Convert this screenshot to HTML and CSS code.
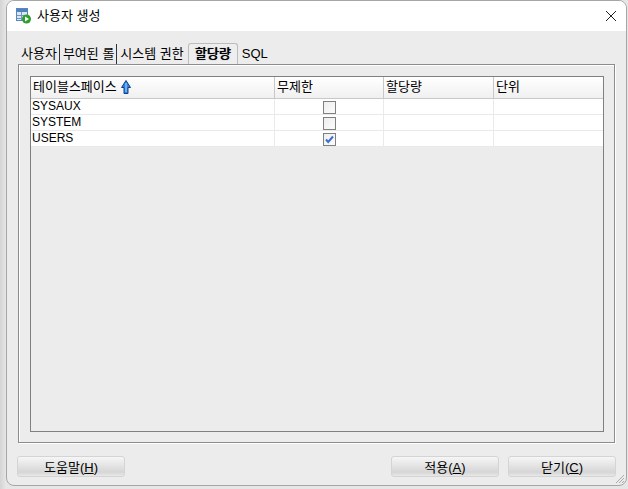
FILE: index.html
```html
<!DOCTYPE html>
<html lang="ko">
<head>
<meta charset="utf-8">
<title>사용자 생성</title>
<link rel="stylesheet" href="styles.css">
</head>
<body>
<div class="window">
  <header class="titlebar">
    <svg class="app-icon" width="15" height="16" viewBox="0 0 15 16">
      <rect x="0.5" y="0.500" width="11" height="12" fill="#dbe7f5" stroke="#5a86bd"/>
      <rect x="1" y="1" width="10" height="3" fill="#4f81bd"/>
      <path d="M1 7.500H11M1 10.500H11M5.500 4V12" stroke="#6f97c8" fill="none"/>
      <circle cx="10.500" cy="11" r="4.500" fill="#2e9e2e"/>
      <path d="M9 8.500L13 11L9 13.500Z" fill="#fff"/>
    </svg>
    <span class="title">사용자 생성</span>
    <svg class="close" width="12" height="12" viewBox="0 0 12 12">
      <path d="M1 1L11 11M11 1L1 11" stroke="#222" stroke-width="1" fill="none"/>
    </svg>
  </header>
  <main class="content">
    <nav class="tabs">
      <span class="tab first">사용자</span>
      <span class="tab sep">부여된 롤</span>
      <span class="tab sep">시스템 권한</span>
      <span class="tab active">할당량</span>
      <span class="tab sql">SQL</span>
    </nav>
    <section class="panel">
      <div class="table">
        <div class="row head">
          <div class="cell">테이블스페이스<svg class="sort" width="10" height="14" viewBox="0 0 10 14"><path d="M5 .5L9.500 7.500H7V13.500H3V7.500H.5Z" fill="#2f86e0" stroke="#123f8a"/><path d="M5 3V12" stroke="#a9d6ff" fill="none"/></svg></div>
          <div class="cell">무제한</div>
          <div class="cell">할당량</div>
          <div class="cell">단위</div>
        </div>
        <div class="row">
          <div class="cell">SYSAUX</div>
          <div class="cell center"><span class="check"></span></div>
          <div class="cell"></div>
          <div class="cell"></div>
        </div>
        <div class="row">
          <div class="cell">SYSTEM</div>
          <div class="cell center"><span class="check"></span></div>
          <div class="cell"></div>
          <div class="cell"></div>
        </div>
        <div class="row">
          <div class="cell">USERS</div>
          <div class="cell center"><span class="check"><svg width="11" height="11" viewBox="0 0 11 11"><path d="M2 5.500L4.200 8L9 2.500" stroke="#3a6fd0" stroke-width="2" fill="none"/></svg></span></div>
          <div class="cell"></div>
          <div class="cell"></div>
        </div>
      </div>
    </section>
    <footer class="buttons">
      <button class="btn">도움말(<u>H</u>)</button>
      <span class="spacer"></span>
      <button class="btn">적용(<u>A</u>)</button>
      <button class="btn">닫기(<u>C</u>)</button>
    </footer>
  </main>
  <svg class="grip" width="10" height="10" viewBox="0 0 10 10"><path d="M9 1L1 9M9 4L4 9M9 7L7 9" stroke="#aaa" fill="none"/></svg>
</div>
</body>
</html>
```
FILE: styles.css
```css
* { box-sizing: border-box; }
html, body { margin: 0; height: 100%; }
body {
  width: 628px;
  height: 489px;
  overflow: hidden;
  padding: 0 1px 3px 6px;
  background: linear-gradient(90deg, #d4d4d4, #e6e6e6 6px);
  font: 13px "Liberation Sans", "Noto Sans CJK KR", sans-serif;
  color: #000;
}
.window {
  position: relative;
  height: 100%;
  display: flex;
  flex-direction: column;
  border: 1px solid #a6a6a6;
  border-radius: 8px;
  overflow: hidden;
  background: #ececec;
}
.titlebar {
  flex: none;
  height: 30px;
  display: flex;
  align-items: center;
  padding: 0 9px 0 9px;
  background: #fff;
}
.app-icon { margin-right: 6px; }
.title { flex: 1; position: relative; top: -2px; }
.content {
  flex: 1;
  display: flex;
  flex-direction: column;
  padding: 0 10px 8px 10px;
}
.tabs {
  flex: none;
  height: 33px;
  display: flex;
  align-items: flex-end;
}
.tab { height: 20px; line-height: 19px; padding: 0 2px; white-space: nowrap; }
.first { margin-left: 2px; }
.sep { padding-left: 3px; border-left: 1px solid #333; }
.active {
  margin-left: 2px;
  padding: 0;
  width: 50px;
  text-align: center;
  height: 21px;
  text-shadow: 0.5px 0 0 #000, 0 0 1px #555;
  background: #eee;
  border: 1px solid #bcbcbc;
  border-bottom: 0;
  border-radius: 3px 3px 0 0;
}
.sql { margin-left: 2px; }
.panel {
  flex: 1;
  margin: 0 1px;
  padding: 11px 10px 10px 11px;
  border: 1px solid #8c8c8c;
  box-shadow: 1px 1px 0 #fff, inset 1px 1px 0 #fff;
  background: #ececec;
}
.table { height: 100%; border: 1px solid #808080; }
.row {
  display: grid;
  grid-template-columns: 244px 109px 110px 1fr;
  height: 16px;
  background: #fff;
  border-bottom: 1px solid #eaeaea;
  font-size: 12px;
  line-height: 14px;
}
.row.head {
  height: 22px;
  background: linear-gradient(#fff, #f0f0f0);
  border-bottom: 1px solid #c8c8c8;
  font-size: 13px;
  line-height: 20px;
}
.cell {
  display: flex;
  align-items: center;
  padding: 0 0 2px 1px;
  border-right: 1px solid #eaeaea;
  white-space: nowrap;
}
.head .cell { padding-left: 2px; padding-bottom: 1px; border-right-color: #c8c8c8; }
.cell:last-child { border-right: 0; }
.center { justify-content: center; padding: 0; }
.sort { margin-left: 4px; }
.check {
  width: 13px;
  height: 13px;
  display: flex;
  align-items: center;
  justify-content: center;
  border: 1px solid #808080;
  background: linear-gradient(135deg, #eee, #fbfbfb);
}
.buttons {
  flex: none;
  display: flex;
  gap: 9px;
  margin-top: 13px;
}
.spacer { flex: 1; }
.btn {
  width: 108px;
  height: 21px;
  padding: 0;
  font: 13px "Liberation Sans", "Noto Sans CJK KR", sans-serif;
  color: #000;
  border: 1px solid #d4d4d4;
  border-radius: 3px;
  background: linear-gradient(#f6f6f6, #e4e4e4 45%, #d6d6d6 80%, #e8e8e8);
}
.grip { position: absolute; right: 1px; bottom: 1px; }
```
